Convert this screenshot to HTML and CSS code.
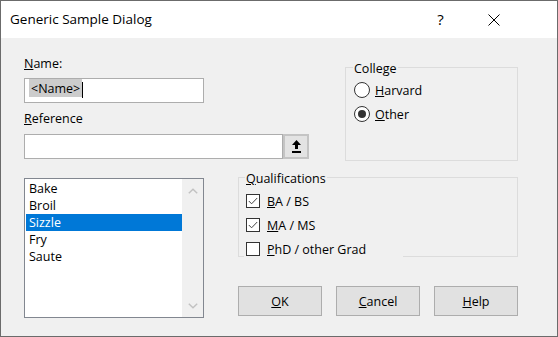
FILE: index.html
```html
<!DOCTYPE html>
<html lang="en">
<head>
  <meta charset="UTF-8">
  <title>Generic Sample Dialog</title>
  <link rel="stylesheet" href="styles.css">
</head>
<body>
  <div class="window">
    <div class="titlebar">
      <span class="title">Generic Sample Dialog</span>
      <span class="caption-btn help">?</span>
      <span class="caption-btn">
        <svg width="12" height="12" viewBox="0 0 12 12"><path d="M0.5 0.5 L11.5 11.5 M11.5 0.5 L0.5 11.5" stroke="#000" stroke-width="1" fill="none"/></svg>
      </span>
    </div>

    <div class="content">
      <div class="top-row">
        <!-- name / reference -->
        <div class="fields">
          <div class="label"><u>N</u>ame:</div>
          <div class="edit name-edit"><span class="sel">&lt;Name&gt;</span><span class="caret"></span></div>
          <div class="label ref-label"><u>R</u>eference</div>
          <div class="ref-row">
            <div class="edit ref-edit"></div>
            <div class="browse-btn">
              <svg width="9" height="13" viewBox="0 0 9 13"><path d="M4.5 0 L9 5 H6 V9 H3 V5 H0 Z" fill="#000"/><rect x="0" y="11" width="9" height="2" fill="#000"/></svg>
            </div>
          </div>
        </div>

        <!-- college -->
        <div class="group college">
          <div class="legend">College</div>
          <div class="option"><span class="radio"></span><span><u>H</u>arvard</span></div>
          <div class="option"><span class="radio checked"></span><span><u>O</u>ther</span></div>
        </div>
      </div>

      <div class="bottom-row">
        <div class="listbox">
          <ul class="items">
            <li>Bake</li>
            <li>Broil</li>
            <li class="selected">Sizzle</li>
            <li>Fry</li>
            <li>Saute</li>
          </ul>
          <div class="scrollbar">
            <span class="arrow"><svg width="10" height="6" viewBox="0 0 10 6"><polyline points="0.8,5.3 5,1.2 9.2,5.3" fill="none" stroke="#c2c2c2" stroke-width="1.4"/></svg></span>
            <span class="arrow"><svg width="10" height="6" viewBox="0 0 10 6"><polyline points="0.8,0.7 5,4.8 9.2,0.7" fill="none" stroke="#c2c2c2" stroke-width="1.4"/></svg></span>
          </div>
        </div>

        <div class="right-col">
          <!-- qualifications -->
          <div class="group quals">
            <div class="legend"><u>Q</u>ualifications</div>
            <div class="check-row"><span class="checkbox"><svg width="10" height="8" viewBox="0 0 10 8"><polyline points="0.8,4 3.6,6.8 9.2,1" fill="none" stroke="#444" stroke-width="1"/></svg></span><span><u>B</u>A / BS</span></div>
            <div class="check-row"><span class="checkbox"><svg width="10" height="8" viewBox="0 0 10 8"><polyline points="0.8,4 3.6,6.8 9.2,1" fill="none" stroke="#444" stroke-width="1"/></svg></span><span><u>M</u>A / MS</span></div>
            <div class="check-row"><span class="checkbox"></span><span><u>P</u>hD / other Grad</span></div>
          </div>

          <div class="buttons">
            <div class="button"><span><u>O</u>K</span></div>
            <div class="button"><span><u>C</u>ancel</span></div>
            <div class="button"><span><u>H</u>elp</span></div>
          </div>
        </div>
      </div>
    </div>
  </div>
</body>
</html>
```

FILE: styles.css
```css
* {
  box-sizing: border-box;
}

body {
  margin: 0;
  font-family: 'Open Sans', 'Noto Sans', sans-serif;
  font-size: 12.5px;
  line-height: 17px;
  color: #000;
}

.window {
  width: 558px;
  height: 337px;
  border: 1px solid #6b6b6b;
  background: #f0f0f0;
}

/* title bar */
.titlebar {
  height: 37px;
  background: #fff;
  display: flex;
  align-items: center;
  padding-left: 9px;
  padding-right: 37px;
}

.title {
  flex: 1;
  font-size: 13.5px;
}

.caption-btn {
  width: 53px;
  height: 37px;
  display: flex;
  align-items: center;
  justify-content: center;
}

.caption-btn.help {
  font-size: 15px;
}

.content {
  padding: 17px 0 0 23px;
}

.top-row,
.bottom-row {
  display: flex;
}

.bottom-row {
  margin-top: 16px;
}

/* edit fields */
.fields {
  width: 285px;
}

.label {
  height: 17px;
}

.edit {
  height: 25px;
  border: 1px solid #adadad;
  background: #fff;
}

.name-edit {
  width: 180px;
  margin-top: 6px;
  padding-left: 4px;
  display: flex;
  align-items: flex-start;
}

.sel {
  height: 18px;
  padding: 2px 2px 0 2px;
  line-height: 16px;
  background: #cccccc;
}

.caret {
  width: 1px;
  height: 16px;
  margin-top: 3px;
  background: #000;
}

.ref-label {
  margin-top: 7px;
}

.ref-row {
  display: flex;
  margin-top: 7px;
}

.ref-edit {
  width: 259px;
}

.browse-btn {
  width: 26px;
  height: 25px;
  border: 2px solid #c4c4c4;
  background: #e3e3e3;
  display: flex;
  align-items: center;
  justify-content: center;
}

/* group boxes */
.group {
  border: 1px solid #dcdcdc;
}

.legend {
  width: fit-content;
  margin-top: -8px;
  padding: 0 1px;
  background: #f0f0f0;
}

.college {
  width: 173px;
  height: 94px;
  margin: 12px 0 0 36px;
  padding-left: 8px;
}

.college .legend {
  margin-left: -1px;
  margin-bottom: 1px;
}

.option {
  display: flex;
  align-items: center;
  gap: 5px;
  height: 24px;
}

.radio {
  width: 16px;
  height: 16px;
  border: 1px solid #333;
  border-radius: 50%;
  background: #fff;
  display: flex;
  align-items: center;
  justify-content: center;
}

.radio.checked::after {
  content: "";
  width: 8px;
  height: 8px;
  border-radius: 50%;
  background: #333;
}

/* list box */
.listbox {
  width: 180px;
  height: 140px;
  margin-top: 1px;
  border: 1px solid #828790;
  background: #fff;
  display: flex;
}

.items {
  list-style: none;
  margin: 0;
  padding: 1px 0 0 1px;
  width: 157px;
}

.items li {
  height: 17px;
  padding-left: 3px;
}

.items li.selected {
  background: #0078d7;
  color: #fff;
}

.scrollbar {
  width: 21px;
  background: #f0f0f0;
  display: flex;
  flex-direction: column;
  justify-content: space-between;
}

.arrow {
  height: 23px;
  display: flex;
  align-items: center;
  justify-content: center;
}

/* qualifications + buttons */
.right-col {
  width: 280px;
  margin-left: 34px;
}

.quals {
  height: 80px;
  padding-left: 5px;
}

.quals .legend {
  margin-left: 1px;
  margin-bottom: 2px;
}

.check-row {
  display: flex;
  align-items: center;
  gap: 7px;
  width: 159px;
  height: 24px;
  padding-left: 2px;
  background: #f0f0f0;
}

.checkbox {
  width: 14px;
  height: 14px;
  border: 1px solid #333;
  background: #fff;
  display: flex;
  align-items: center;
  justify-content: center;
}

.buttons {
  display: flex;
  justify-content: space-between;
  margin-top: 29px;
}

.button {
  width: 84px;
  height: 30px;
  border: 1px solid #adadad;
  background: #e1e1e1;
  display: flex;
  align-items: center;
  justify-content: center;
}
```
